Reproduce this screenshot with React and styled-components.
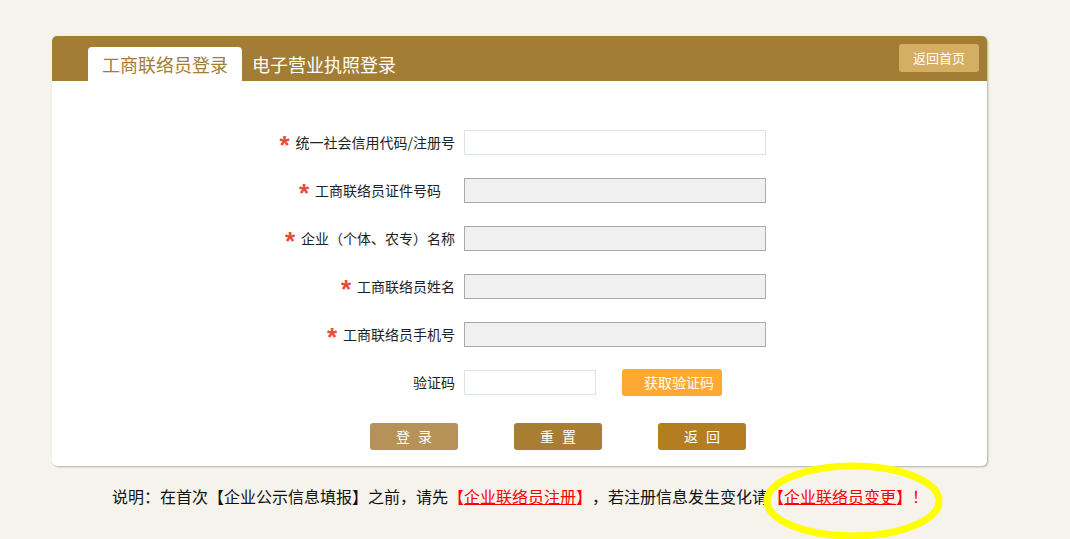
import React from "react";
import styled, { createGlobalStyle } from "styled-components";

const GlobalStyle = createGlobalStyle`
  html, body {
    margin: 0;
    padding: 0;
    background: #f6f3ec;
    font-family: "Noto Sans CJK SC", "Noto Sans", sans-serif;
    text-spacing-trim: space-all;
  }
`;

const Page = styled.div`
  position: relative;
  width: 1070px;
  height: 539px;
  overflow: hidden;
  padding-top: 36px;
  box-sizing: border-box;
`;

const Card = styled.div`
  margin-left: 52px;
  width: 935px;
  height: 430px;
  background: #fff;
  border-radius: 5px;
  box-shadow: 1px 1px 2px rgba(0, 0, 0, 0.28);
  display: flex;
  flex-direction: column;
`;

const Header = styled.div`
  height: 45px;
  background: #a47d35;
  border-radius: 5px 5px 0 0;
  display: flex;
  align-items: flex-end;
  padding-left: 36px;
  padding-right: 8px;
`;

const Tab = styled.div`
  height: 34px;
  padding: 0 14px;
  margin-right: ${(p) => (p.$active ? "-4px" : "0")};
  border-radius: 4px 4px 0 0;
  background: ${(p) => (p.$active ? "#fff" : "transparent")};
  color: ${(p) => (p.$active ? "#a47d35" : "#fff")};
  font-size: 18px;
  line-height: 34px;
`;

const HomeButton = styled.div`
  margin-left: auto;
  align-self: flex-start;
  margin-top: 8px;
  width: 80px;
  height: 28px;
  background: #d4ae62;
  border-radius: 3px;
  color: #fff;
  font-size: 13px;
  line-height: 28px;
  text-align: center;
`;

const Form = styled.div`
  padding-top: 37px;
  padding-left: 203px;
  display: flex;
  flex-direction: column;
`;

const Row = styled.div`
  height: 48px;
  display: flex;
  align-items: center;
`;

const Label = styled.div`
  width: 200px;
  margin-right: 9px;
  display: flex;
  justify-content: flex-end;
  align-items: center;
  font-size: 14px;
  color: #222;
  white-space: pre;
`;

const Star = styled.span`
  color: #e94b3c;
  font-family: "Liberation Sans", Arial, sans-serif;
  font-size: 26px;
  font-weight: bold;
  margin-right: 6px;
  height: 14px;
  line-height: 21px;
  overflow: visible;
`;

const Input = styled.div`
  width: ${(p) => p.$w || 302}px;
  height: 25px;
  box-sizing: border-box;
  border: 1px solid ${(p) => (p.$disabled ? "#ababab" : "#dbe2ec")};
  background: ${(p) => (p.$disabled ? "#f0f0f0" : "#fff")};
`;

const CodeButton = styled.div`
  margin-left: 26px;
  width: 100px;
  height: 27px;
  box-sizing: border-box;
  padding-left: 14px;
  border-radius: 3px;
  background: #fea931;
  color: #fff;
  font-size: 14px;
  line-height: 27px;
  text-align: center;
`;

const Actions = styled.div`
  display: flex;
  gap: 56px;
  padding-left: 115px;
  margin-top: 17px;
`;

const ActionButton = styled.div`
  width: 88px;
  height: 27px;
  border-radius: 3px;
  background: ${(p) => p.$bg};
  color: #fff;
  font-size: 14px;
  line-height: 27px;
  text-align: center;
  letter-spacing: 8px;
  text-indent: 8px;
`;

const Note = styled.div`
  margin-left: 112px;
  margin-top: 18px;
  font-size: 16px;
  color: #111;
  white-space: nowrap;
`;

const RedLink = styled.span`
  color: #f00;
  a {
    color: #f00;
    text-decoration: underline;
  }
`;

const Circle = styled.svg`
  position: absolute;
  left: 760px;
  top: 460px;
  pointer-events: none;
`;

const fields = [
  { label: "统一社会信用代码/注册号", disabled: false },
  { label: "工商联络员证件号码　", disabled: true },
  { label: "企业（个体、农专）名称", disabled: true },
  { label: "工商联络员姓名", disabled: true },
  { label: "工商联络员手机号", disabled: true },
];

export default function App() {
  return (
    <Page>
      <GlobalStyle />
      <Card>
        <Header>
          <Tab $active>工商联络员登录</Tab>
          <Tab>电子营业执照登录</Tab>
          <HomeButton>返回首页</HomeButton>
        </Header>
        <Form>
          {fields.map((f) => (
            <Row key={f.label}>
              <Label>
                <Star>*</Star>
                {f.label}
              </Label>
              <Input $disabled={f.disabled} />
            </Row>
          ))}
          <Row>
            <Label>验证码</Label>
            <Input $w={132} />
            <CodeButton>获取验证码</CodeButton>
          </Row>
          <Actions>
            <ActionButton $bg="#b69259">登录</ActionButton>
            <ActionButton $bg="#a87f32">重置</ActionButton>
            <ActionButton $bg="#b47e20">返回</ActionButton>
          </Actions>
        </Form>
      </Card>
      <Note>
        说明：在首次【企业公示信息填报】之前，请先
        <RedLink>
          【<a>企业联络员注册</a>】
        </RedLink>
        ，若注册信息发生变化请
        <RedLink>
          【<a>企业联络员变更</a>】！
        </RedLink>
      </Note>
      <Circle width="190" height="85" viewBox="0 0 190 85">
        <ellipse cx="93" cy="41" rx="86" ry="35" fill="none" stroke="#ffff00" strokeWidth="7" />
      </Circle>
    </Page>
  );
}
